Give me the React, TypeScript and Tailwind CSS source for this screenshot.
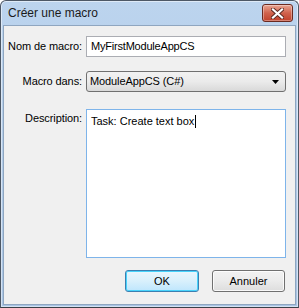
import React from 'react';

const font = { fontFamily: '"Segoe UI", "Liberation Sans", Arial, sans-serif' };

function CloseButton() {
  return (
    <div className="flex h-[18px] w-[31px] items-center justify-center rounded-[3px] border border-[#6b2a20] bg-gradient-to-b from-[#e8a593] via-[#d0624c] to-[#c0402a] shadow-[inset_0_0_0_1px_rgba(255,255,255,0.35)]">
      <svg width="13" height="11" viewBox="0 0 13 11">
        <path d="M2 1.5 L11 9.5 M11 1.5 L2 9.5" stroke="#5a2a22" strokeWidth="4" strokeLinecap="square" />
        <path d="M2 1.5 L11 9.5 M11 1.5 L2 9.5" stroke="#ffffff" strokeWidth="2.2" strokeLinecap="square" />
      </svg>
    </div>
  );
}

function Row({ label, children, top }: { label: string; children: React.ReactNode; top?: boolean }) {
  return (
    <div className={`flex gap-[4px] ${top ? 'items-start' : 'items-center'}`}>
      <div className={`w-[74px] shrink-0 whitespace-nowrap text-right text-[11px] tracking-[-0.1px] text-black ${top ? 'pt-[1px]' : ''}`}>
        {label}
      </div>
      {children}
    </div>
  );
}

export default function App() {
  return (
    <div className="h-[308px] w-[299px] overflow-hidden bg-white" style={font}>
      <div className="flex h-full w-full flex-col rounded-t-[6px] border border-[#4d5866] border-b-[#3a3f46] bg-gradient-to-b from-[#bcd4ee] to-[#a8c4e4] px-[2px] pb-[2px] shadow-[inset_0_0_0_1px_rgba(255,255,255,0.5)]">
        {/* Title bar */}
        <div className="flex h-[24px] items-center justify-between pl-[5px] pr-[3px]">
          <span className="text-[12px] text-[#1a1a1a]">Créer une macro</span>
          <CloseButton />
        </div>

        {/* Client area */}
        <div className="flex flex-1 flex-col border border-[#8fa6c0] bg-[#f0f0f0] pl-[4px] pr-[9px] pt-[10px]">
          <div className="flex flex-col">
            <Row label="Nom de macro:">
              <div className="flex h-[21px] flex-1 items-center whitespace-nowrap border border-[#abadb3] bg-white px-[4px] text-[11px] tracking-[-0.2px] text-black">
                MyFirstModuleAppCS
              </div>
            </Row>

            <div className="h-[14px]" />

            <Row label="Macro dans:">
              <div className="flex h-[21px] flex-1 items-center justify-between whitespace-nowrap rounded-[3px] border border-[#707070] bg-gradient-to-b from-[#f2f2f2] via-[#ebebeb] to-[#d9d9d9] pl-[3px] pr-[6px] text-[11px] tracking-[-0.1px] text-black">
                <span>ModuleAppCS (C#)</span>
                <svg width="7" height="4" viewBox="0 0 7 4">
                  <path d="M0 0 H7 L3.5 4 Z" fill="#000" />
                </svg>
              </div>
            </Row>

            <div className="h-[17px]" />

            <Row label="Description:" top>
              <div className="h-[149px] flex-1 whitespace-nowrap border border-[#7eb4ea] bg-white px-[4px] pt-[2px] text-[11px] text-black">
                Task: Create text box
                <span className="ml-[1px] inline-block h-[13px] w-[1px] translate-y-[3px] bg-black" />
              </div>
            </Row>
          </div>

          <div className="mt-auto mb-[12px] flex justify-end gap-[13px] pr-[1px]">
            <button className="flex h-[22px] w-[74px] items-center justify-center rounded-[3px] border border-[#3c7fb1] bg-gradient-to-b from-[#eaf6fd] via-[#d9f0fc] to-[#bee6fd] text-[11px] text-black shadow-[inset_0_0_0_1px_#48d3fb]">
              OK
            </button>
            <button className="flex h-[22px] w-[73px] items-center justify-center rounded-[3px] border border-[#707070] bg-gradient-to-b from-[#f2f2f2] via-[#ebebeb] to-[#dddddd] text-[11px] text-black shadow-[inset_0_0_0_1px_rgba(255,255,255,0.8)]">
              Annuler
            </button>
          </div>
        </div>
      </div>
    </div>
  );
}
